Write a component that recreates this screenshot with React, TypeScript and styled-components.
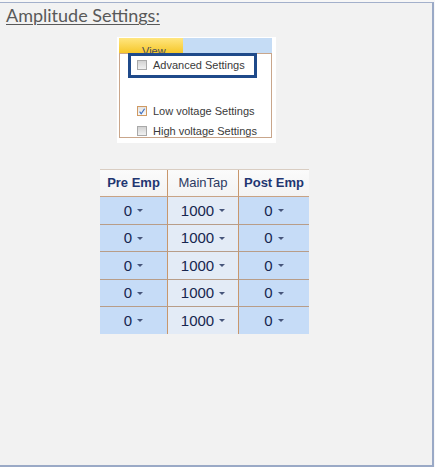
import React from "react";
import styled, { createGlobalStyle } from "styled-components";

const Global = createGlobalStyle`
  html, body { margin: 0; padding: 0; background: #f7f7f7; }
  body { font-family: "Liberation Sans", Arial, sans-serif; }
  * { box-sizing: border-box; }
`;

const Frame = styled.div`
  margin-top: 2px;
  width: 434px;
  height: 465px;
  background: #f2f2f2;
  border-top: 1px solid #a3b0cb;
  border-right: 2px solid #9aa9c6;
  border-bottom: 2px solid #9aa9c6;
  display: flex;
  flex-direction: column;
  align-items: flex-start;
`;

const Title = styled.div`
  margin: 1px 0 0 6px;
  font-family: Lato, "Open Sans", sans-serif;
  font-size: 18px;
  line-height: 22px;
  color: #595959;
  text-decoration: underline;
  text-underline-offset: 2px;
  text-decoration-thickness: 1px;
`;

const Shot = styled.div`
  margin: 11px 0 0 117px;
  width: 159px;
  height: 106px;
  background: #fff;
  padding: 1px 4px 0 2px;
  display: flex;
  flex-direction: column;
`;

const MenuBar = styled.div`
  height: 15px;
  flex: none;
  display: flex;
  width: 153px;
`;

const Tab = styled.div`
  width: 64px;
  background: linear-gradient(#ffe680, #f6c72a);
  font-size: 11px;
  line-height: 13px;
  padding: 7px 0 0 23px;
  color: #454b5e;
  white-space: nowrap;
`;

const BarRest = styled.div`
  flex: 1;
  background: #c5dcf5;
`;

const Panel = styled.div`
  width: 153px;
  height: 85px;
  flex: none;
  border: 1px solid #c9a68b;
  background: #fff;
  display: flex;
  flex-direction: column;
`;

const Highlight = styled.div`
  position: relative;
  flex: none;
  margin: -1px 0 0 8px;
  width: 129px;
  height: 25px;
  border: 3px solid #1f4a8a;
  background: #fff;
  display: flex;
  align-items: center;
  gap: 6px;
  padding: 0 0 2px 6px;
`;

const Options = styled.div`
  flex: none;
  margin-top: 23px;
  display: flex;
  flex-direction: column;
`;

const OptionRow = styled.div`
  height: 20px;
  flex: none;
  display: flex;
  align-items: center;
  gap: 6px;
  padding-left: 17px;
`;

const Box = styled.span<{ $checked?: boolean }>`
  width: 10px;
  height: 10px;
  flex: none;
  border: 1px solid ${(p) => (p.$checked ? "#d09a62" : "#a9a9a9")};
  background: ${(p) =>
    p.$checked
      ? "linear-gradient(#e4e4e4, #f8f8f8)"
      : "linear-gradient(#d2d2d2, #f1f1f1)"};
  display: flex;
  align-items: center;
  justify-content: center;
`;

const Label = styled.span`
  font-size: 11px;
  line-height: 12px;
  color: #3a3a3a;
  white-space: nowrap;
`;

const Grid = styled.div`
  margin: 26px 0 0 100px;
  display: grid;
  grid-template-columns: 68px 71px 70px;
  border-top: 1px solid #d9cdc2;
`;

const HeadCell = styled.div<{ $last?: boolean; $light?: boolean }>`
  height: 27px;
  background: linear-gradient(#fbfbfb, #f3f3f3);
  border-right: ${(p) => (p.$last ? "none" : "1px solid #c8976c")};
  border-bottom: 1px solid #c8a385;
  display: flex;
  align-items: center;
  justify-content: center;
  font-size: 13px;
  font-weight: ${(p) => (p.$light ? 400 : 700)};
  color: ${(p) => (p.$light ? "#2c3a62" : "#1f3671")};
  white-space: nowrap;
  padding-bottom: 1px;
`;

const Cell = styled.div<{ $last?: boolean; $mid?: boolean; $bottom?: boolean }>`
  height: ${(p) => (p.$bottom ? "26.5px" : "27.5px")};
  background: ${(p) => (p.$mid ? "#e3ebf6" : "#c6dcf7")};
  border-right: ${(p) => (p.$last ? "none" : "1px solid #c8976c")};
  border-bottom: ${(p) => (p.$bottom ? "none" : "1px solid #b89d88")};
  display: flex;
  align-items: center;
  justify-content: center;
  gap: 5px;
  font-size: 15px;
  color: #17264f;
`;

const Arrow = styled.span`
  width: 0;
  height: 0;
  border-left: 3px solid transparent;
  border-right: 3px solid transparent;
  border-top: 3.5px solid #46557a;
  margin-top: 1px;
`;

const Check = () => (
  <svg width="9" height="9" viewBox="0 0 9 9">
    <path d="M1.8 4.6 L3.6 7 L7.4 1.4" stroke="#3b6fc2" strokeWidth="1.3" fill="none" />
  </svg>
);

const rows = [0, 1, 2, 3, 4];

export default function App() {
  return (
    <>
      <Global />
      <Frame>
        <Title>Amplitude Settings:</Title>
        <Shot>
          <MenuBar>
            <Tab>View</Tab>
            <BarRest />
          </MenuBar>
          <Panel>
            <Highlight>
              <Box />
              <Label>Advanced Settings</Label>
            </Highlight>
            <Options>
              <OptionRow>
                <Box $checked>
                  <Check />
                </Box>
                <Label>Low voltage Settings</Label>
              </OptionRow>
              <OptionRow>
                <Box />
                <Label>High voltage Settings</Label>
              </OptionRow>
            </Options>
          </Panel>
        </Shot>
        <Grid>
          <HeadCell>Pre Emp</HeadCell>
          <HeadCell $light>MainTap</HeadCell>
          <HeadCell $last>Post Emp</HeadCell>
          {rows.map((r) => (
            <React.Fragment key={r}>
              <Cell $bottom={r === 4}>
                0<Arrow />
              </Cell>
              <Cell $mid $bottom={r === 4}>
                1000<Arrow />
              </Cell>
              <Cell $last $bottom={r === 4}>
                0<Arrow />
              </Cell>
            </React.Fragment>
          ))}
        </Grid>
      </Frame>
    </>
  );
}
